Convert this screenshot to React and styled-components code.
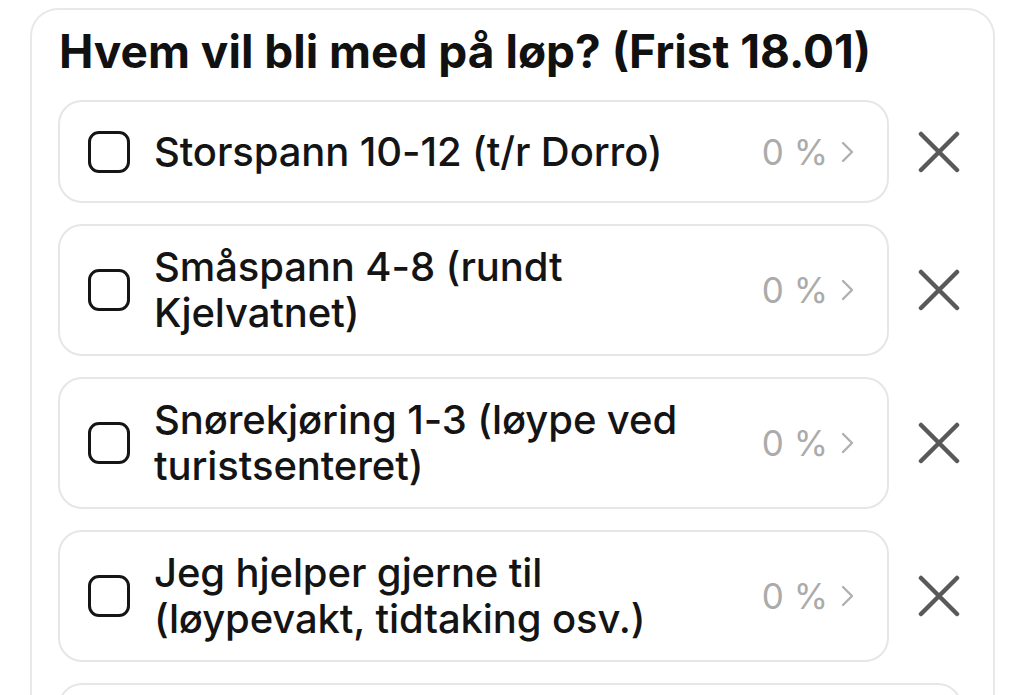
import React from "react";
import styled, { createGlobalStyle } from "styled-components";

const Global = createGlobalStyle`
  html, body { margin: 0; padding: 0; background: #ffffff; }
  body { font-family: Inter, "Noto Sans", "Liberation Sans", sans-serif; color: #111; overflow: hidden; }
`;

const Page = styled.div`
  padding: 8px 29px 0 30px;
  height: 695px;
  box-sizing: border-box;
  overflow: hidden;
`;

const Card = styled.section`
  border: 2px solid #e8e8e8;
  border-bottom: none;
  border-radius: 28px 28px 0 0;
  padding: 13px 0 40px 26px;
  box-sizing: border-box;
  height: 700px;
`;

const Title = styled.h2`
  margin: 0 0 21px 1px;
  font-size: 46px;
  line-height: 56px;
  font-weight: 700;
  letter-spacing: 0;
  color: #111;
  white-space: nowrap;
`;

const List = styled.div`
  display: flex;
  flex-direction: column;
  gap: 21px;
`;

const OptionLine = styled.div`
  display: flex;
  align-items: center;
  gap: 29px;
`;

const Option = styled.div`
  flex: 0 0 ${(p) => p.$width}px;
  box-sizing: border-box;
  min-height: ${(p) => p.$min}px;
  border: 2px solid #e6e6e6;
  border-radius: 24px;
  display: flex;
  align-items: center;
  padding: 18px 32px 18px 28px;
`;

const Box = styled.span`
  flex: 0 0 auto;
  width: 42px;
  height: 42px;
  box-sizing: border-box;
  border: 3px solid #151515;
  border-radius: 11px;
  margin-right: 24px;
`;

const Label = styled.span`
  flex: 1 1 auto;
  font-size: 40px;
  line-height: 46px;
  font-weight: 500;
  letter-spacing: -0.1px;
  color: #141414;
  padding-right: 24px;
`;

const Pct = styled.span`
  flex: 0 0 auto;
  display: flex;
  align-items: center;
  gap: 13px;
  font-size: 35px;
  color: #ababab;
  font-weight: 400;
  margin-right: 1px;
`;

const Remove = styled.button`
  flex: 0 0 auto;
  width: 42px;
  height: 42px;
  padding: 0;
  border: none;
  background: none;
  display: flex;
  align-items: center;
  justify-content: center;
`;

const Chevron = () => (
  <svg width="13" height="24" viewBox="0 0 13 24" fill="none">
    <path d="M2 3l9 9-9 9" stroke="#b0b0b0" strokeWidth="2.4" strokeLinecap="round" strokeLinejoin="round" />
  </svg>
);

const XIcon = () => (
  <svg width="42" height="42" viewBox="0 0 42 42" fill="none">
    <path d="M3 3l36 36M39 3L3 39" stroke="#595959" strokeWidth="4.5" strokeLinecap="round" />
  </svg>
);

const options = [
  "Storspann 10-12 (t/r Dorro)",
  "Småspann 4-8 (rundt Kjelvatnet)",
  "Snørekjøring 1-3 (løype ved turistsenteret)",
  "Jeg hjelper gjerne til (løypevakt, tidtaking osv.)",
];

export default function App() {
  return (
    <Page>
      <Global />
      <Card>
        <Title>Hvem vil bli med på løp? (Frist 18.01)</Title>
        <List>
          {options.map((o) => (
            <OptionLine key={o}>
              <Option $width={831} $min={103}>
                <Box />
                <Label>{o}</Label>
                <Pct>
                  0 %<Chevron />
                </Pct>
              </Option>
              <Remove aria-label="Fjern">
                <XIcon />
              </Remove>
            </OptionLine>
          ))}
          <OptionLine>
            <Option $width={904} $min={103} />
          </OptionLine>
        </List>
      </Card>
    </Page>
  );
}
